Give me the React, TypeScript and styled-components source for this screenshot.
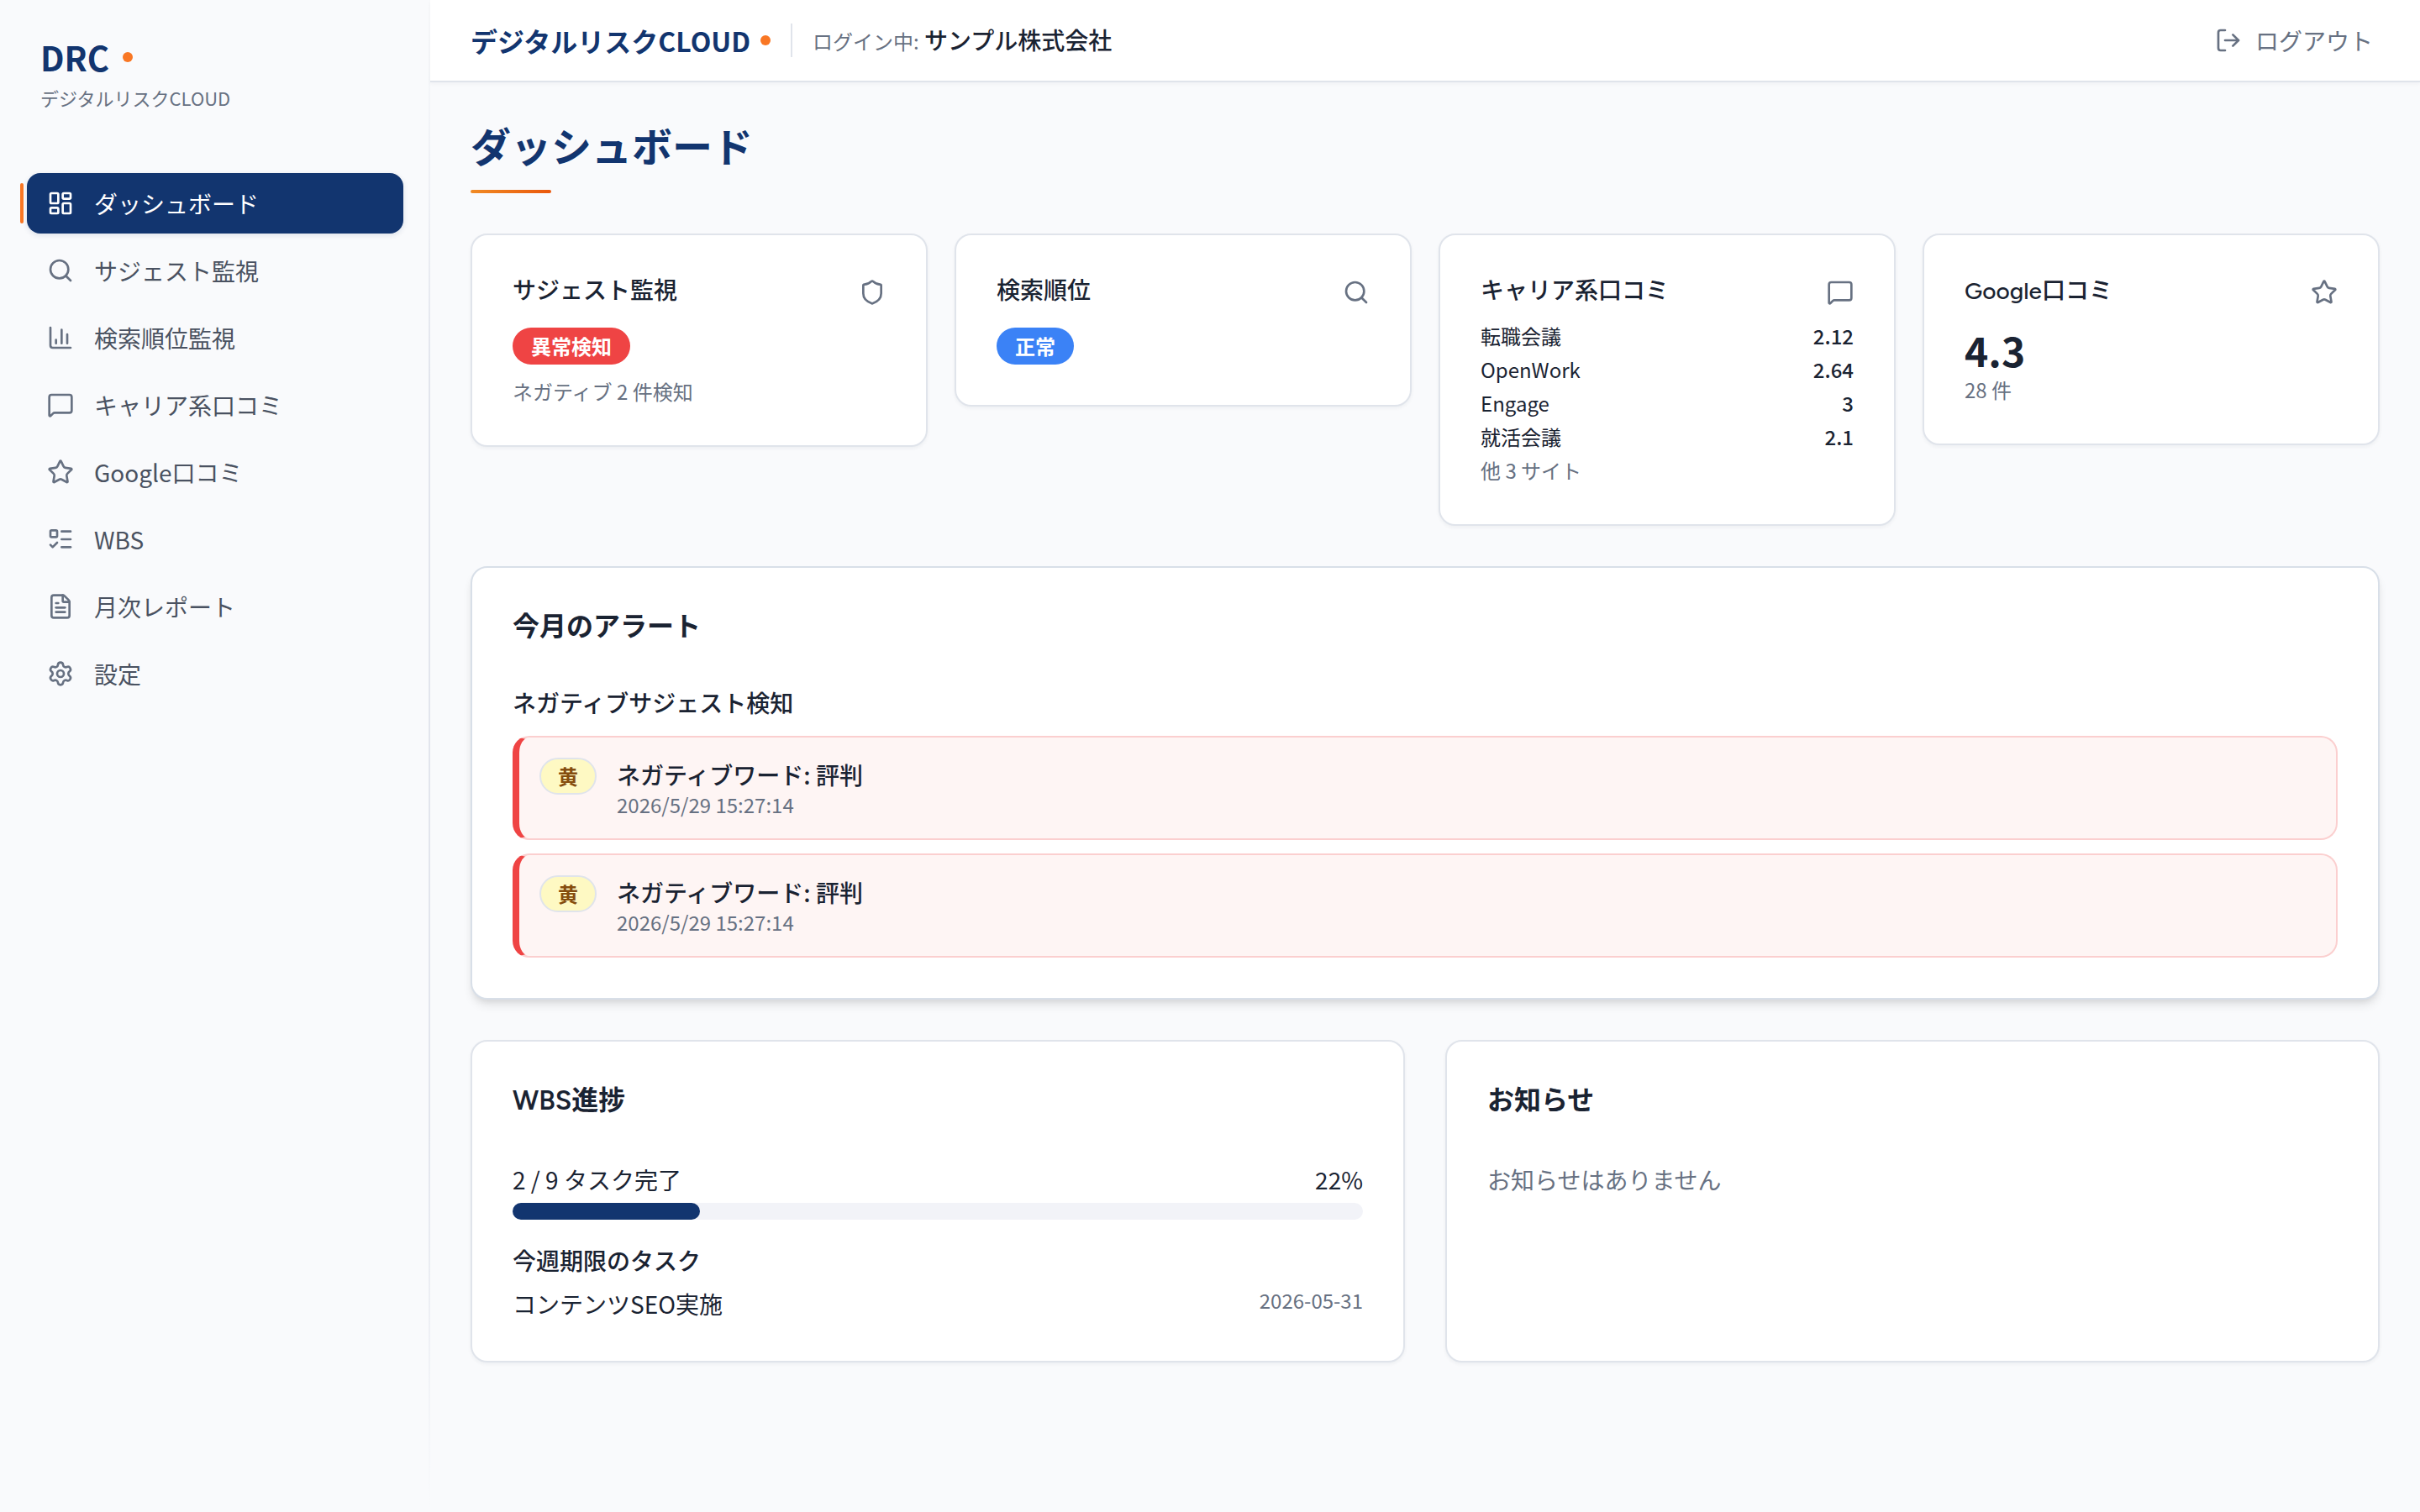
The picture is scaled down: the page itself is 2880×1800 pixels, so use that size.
import React from "react";
import styled, { createGlobalStyle, css } from "styled-components";
import {
  ChartColumn,
  FileText,
  LayoutDashboard,
  ListTodo,
  LogOut,
  MessageSquare,
  Search,
  Settings,
  Shield,
  Star,
  type LucideIcon,
} from "lucide-react";

const color = {
  navy: "#12356f",
  orange: "#f97724",
  ink: "#1a2332",
  body: "#4a5261",
  muted: "#677182",
  line: "#e0e4eb",
  lineStrong: "#d8dfe8",
  page: "#f9fafc",
  track: "#f2f3f8",
  red: "#ef4444",
  blue: "#3b82f6",
};

const GlobalStyle = createGlobalStyle`
  *, *::before, *::after { box-sizing: border-box; }
  body {
    margin: 0;
    background: ${color.page};
    color: ${color.ink};
    font-family: "Noto Sans CJK JP", sans-serif;
    font-size: 28px;
    line-height: 40px;
  }
  h1, h2, h3, p, ul, dl, dd { margin: 0; padding: 0; }
  ul { list-style: none; }
`;

const Shell = styled.div`
  display: flex;
  min-height: 100vh;
`;

const Sidebar = styled.aside`
  flex: 0 0 512px;
  display: flex;
  flex-direction: column;
  gap: 70px;
  padding: 40px 30px 40px 32px;
  border-right: 2px solid;
  border-image: linear-gradient(${color.page}, #e2e5ed 25%, #e2e5ed 75%, ${color.page}) 1;
`;

const Brand = styled.div`
  padding: 0 16px;
`;

const BrandName = styled.div`
  display: flex;
  align-items: center;
  gap: 16px;
  color: ${color.navy};
  font-size: 40px;
  line-height: 56px;
  font-weight: 700;
`;

const Dot = styled.span`
  width: 12px;
  height: 12px;
  border-radius: 50%;
  background: ${color.orange};
`;

const BrandSub = styled.p`
  color: ${color.muted};
  font-size: 22px;
  line-height: 40px;
`;

const NavList = styled.ul`
  display: flex;
  flex-direction: column;
  gap: 8px;
`;

const NavLink = styled.a<{ $active?: boolean }>`
  position: relative;
  display: flex;
  align-items: center;
  gap: 24px;
  height: 72px;
  padding: 0 24px;
  border-radius: 16px;
  color: ${color.body};
  text-decoration: none;

  svg { color: ${color.muted}; }

  ${(p) =>
    p.$active &&
    css`
      background: ${color.navy};
      color: #fff;
      box-shadow: 0 2px 6px rgba(18, 53, 111, 0.12);

      svg { color: #fff; }

      &::before {
        content: "";
        position: absolute;
        left: -8px;
        top: 12px;
        bottom: 12px;
        width: 4px;
        border-radius: 2px;
        background: ${color.orange};
      }
    `}
`;

const Main = styled.div`
  flex: 1;
  min-width: 0;
`;

const Header = styled.header`
  display: flex;
  align-items: center;
  justify-content: space-between;
  height: 98px;
  padding: 0 56px 0 48px;
  background: #fff;
  border-bottom: 2px solid ${color.line};
  box-shadow: 0 2px 4px rgba(18, 35, 60, 0.04);
`;

const HeaderLeft = styled.div`
  display: flex;
  align-items: center;
  gap: 24px;
`;

const Product = styled.div`
  display: flex;
  align-items: center;
  gap: 12px;
  color: ${color.navy};
  font-size: 32px;
  font-weight: 700;
`;

const Divider = styled.span`
  width: 2px;
  height: 40px;
  background: ${color.line};
`;

const Account = styled.p`
  color: ${color.muted};
  font-size: 28px;

  span {
    font-size: 24px;
  }

  strong {
    color: ${color.ink};
    font-weight: 500;
  }
`;

const LogoutButton = styled.button`
  display: flex;
  align-items: center;
  gap: 16px;
  padding: 0;
  border: 0;
  background: none;
  color: ${color.muted};
  font: inherit;
  cursor: pointer;
`;

const Content = styled.main`
  display: flex;
  flex-direction: column;
  gap: 48px;
  padding: 48px;
`;

const PageTitle = styled.h1`
  color: ${color.navy};
  font-size: 48px;
  line-height: 52px;
  font-weight: 700;

  &::after {
    content: "";
    display: block;
    width: 96px;
    height: 4px;
    margin-top: 28px;
    border-radius: 2px;
    background: linear-gradient(90deg, #f08a24, #ea580c);
  }
`;

const StatGrid = styled.section`
  display: grid;
  grid-template-columns: repeat(4, 1fr);
  align-items: start;
  gap: 32px;
`;

const PanelGrid = styled.section`
  display: grid;
  grid-template-columns: repeat(2, 1fr);
  gap: 48px;
`;

const Card = styled.section<{ $raised?: boolean }>`
  padding: 48px;
  border: 2px solid ${(p) => (p.$raised ? color.lineStrong : color.line)};
  border-radius: 20px;
  background: #fff;
  box-shadow: ${(p) =>
    p.$raised
      ? "0 8px 12px -2px rgba(0, 0, 0, 0.1), 0 4px 8px -4px rgba(0, 0, 0, 0.1)"
      : "0 2px 4px rgba(18, 35, 60, 0.05)"};
`;

const StatHead = styled.div`
  display: flex;
  align-items: flex-end;
  justify-content: space-between;
  margin-bottom: 20px;
  color: ${color.muted};
`;

const StatTitle = styled.h2`
  color: ${color.ink};
  font-family: Figtree, "Noto Sans CJK JP", sans-serif;
  font-size: 28px;
  line-height: 36px;
  font-weight: 500;
`;

const Pill = styled.span<{ $tone: "danger" | "info" | "warn" }>`
  display: inline-flex;
  align-items: center;
  height: 44px;
  padding: 0 20px;
  border: 2px solid transparent;
  border-radius: 22px;
  color: #fff;
  background: ${(p) => (p.$tone === "danger" ? color.red : color.blue)} border-box;
  font-size: 24px;
  font-weight: 700;

  ${(p) =>
    p.$tone === "warn" &&
    css`
      border-color: ${color.line};
      background: #fef9c3;
      color: #854d0e;
    `}
`;

const Small = styled.p`
  color: ${color.muted};
  font-size: 24px;
  line-height: 32px;
`;

const StatusBlock = styled.div`
  display: flex;
  flex-direction: column;
  align-items: flex-start;
  gap: 16px;
  padding-top: 6px;
`;

const Score = styled.p`
  font-size: 48px;
  line-height: 64px;
  font-weight: 700;
`;

const SiteList = styled.dl`
  display: flex;
  flex-direction: column;
  gap: 8px;
  margin-bottom: 8px;
`;

const SiteRow = styled.div`
  display: flex;
  justify-content: space-between;
  font-size: 24px;
  line-height: 32px;

  dd { font-weight: 500; }
`;

const PanelTitle = styled.h2`
  margin-bottom: 52px;
  font-family: Figtree, "Noto Sans CJK JP", sans-serif;
  font-size: 32px;
  line-height: 44px;
  font-weight: 600;
`;

const SubTitle = styled.h3`
  font-size: 28px;
  line-height: 32px;
  font-weight: 500;
`;

const AlertList = styled.ul`
  display: flex;
  flex-direction: column;
  gap: 16px;
  margin-top: 24px;
`;

const Alert = styled.li`
  display: flex;
  align-items: flex-start;
  gap: 24px;
  padding: 24px;
  border: 2px solid #fbcfcf;
  border-left: 8px solid ${color.red};
  border-radius: 20px;
  background: #fef5f4;
`;

const AlertText = styled.p`
  font-weight: 500;
`;

const Row = styled.div`
  display: flex;
  justify-content: space-between;
`;

const TaskRow = styled(Row)`
  margin-top: 16px;
`;

const Track = styled.div`
  height: 20px;
  margin: 8px 0 32px;
  border-radius: 10px;
  background: ${color.track};
`;

const Fill = styled.div`
  height: 100%;
  border-radius: 10px;
  background: ${color.navy};
`;

const Empty = styled.p`
  color: ${color.muted};
`;

const navItems: { icon: LucideIcon; label: string }[] = [
  { icon: LayoutDashboard, label: "ダッシュボード" },
  { icon: Search, label: "サジェスト監視" },
  { icon: ChartColumn, label: "検索順位監視" },
  { icon: MessageSquare, label: "キャリア系口コミ" },
  { icon: Star, label: "Google口コミ" },
  { icon: ListTodo, label: "WBS" },
  { icon: FileText, label: "月次レポート" },
  { icon: Settings, label: "設定" },
];

const sites = [
  { name: "転職会議", score: "2.12" },
  { name: "OpenWork", score: "2.64" },
  { name: "Engage", score: "3" },
  { name: "就活会議", score: "2.1" },
];

const alerts = [
  { level: "黄", text: "ネガティブワード: 評判", time: "2026/5/29 15:27:14" },
  { level: "黄", text: "ネガティブワード: 評判", time: "2026/5/29 15:27:14" },
];

function StatCard(props: { title: string; icon: LucideIcon; children: React.ReactNode }) {
  const Icon = props.icon;
  return (
    <Card>
      <StatHead>
        <StatTitle>{props.title}</StatTitle>
        <Icon size={32} />
      </StatHead>
      {props.children}
    </Card>
  );
}

export default function App() {
  const done = 2;
  const total = 9;
  const percent = Math.round((done / total) * 100);

  return (
    <>
      <GlobalStyle />
      <Shell>
        <Sidebar>
          <Brand>
            <BrandName>
              DRC
              <Dot />
            </BrandName>
            <BrandSub>デジタルリスクCLOUD</BrandSub>
          </Brand>
          <nav>
            <NavList>
              {navItems.map(({ icon: Icon, label }, i) => (
                <li key={label}>
                  <NavLink href="#" $active={i === 0}>
                    <Icon size={32} />
                    {label}
                  </NavLink>
                </li>
              ))}
            </NavList>
          </nav>
        </Sidebar>
        <Main>
          <Header>
            <HeaderLeft>
              <Product>
                デジタルリスクCLOUD
                <Dot />
              </Product>
              <Divider />
              <Account>
                <span>ログイン中:</span> <strong>サンプル株式会社</strong>
              </Account>
            </HeaderLeft>
            <LogoutButton type="button">
              <LogOut size={32} />
              ログアウト
            </LogoutButton>
          </Header>
          <Content>
            <PageTitle>ダッシュボード</PageTitle>
            <StatGrid>
              <StatCard title="サジェスト監視" icon={Shield}>
                <StatusBlock>
                  <Pill $tone="danger">異常検知</Pill>
                  <Small>ネガティブ 2 件検知</Small>
                </StatusBlock>
              </StatCard>
              <StatCard title="検索順位" icon={Search}>
                <StatusBlock>
                  <Pill $tone="info">正常</Pill>
                </StatusBlock>
              </StatCard>
              <StatCard title="キャリア系口コミ" icon={MessageSquare}>
                <SiteList>
                  {sites.map((s) => (
                    <SiteRow key={s.name}>
                      <dt>{s.name}</dt>
                      <dd>{s.score}</dd>
                    </SiteRow>
                  ))}
                </SiteList>
                <Small>他 3 サイト</Small>
              </StatCard>
              <StatCard title="Google口コミ" icon={Star}>
                <Score>4.3</Score>
                <Small>28 件</Small>
              </StatCard>
            </StatGrid>
            <Card $raised>
              <PanelTitle>今月のアラート</PanelTitle>
              <SubTitle>ネガティブサジェスト検知</SubTitle>
              <AlertList>
                {alerts.map((a, i) => (
                  <Alert key={i}>
                    <Pill $tone="warn">{a.level}</Pill>
                    <div>
                      <AlertText>{a.text}</AlertText>
                      <Small>{a.time}</Small>
                    </div>
                  </Alert>
                ))}
              </AlertList>
            </Card>
            <PanelGrid>
              <Card>
                <PanelTitle>WBS進捗</PanelTitle>
                <Row>
                  <span>
                    {done} / {total} タスク完了
                  </span>
                  <span>{percent}%</span>
                </Row>
                <Track>
                  <Fill style={{ width: `${percent}%` }} />
                </Track>
                <SubTitle>今週期限のタスク</SubTitle>
                <TaskRow>
                  <span>コンテンツSEO実施</span>
                  <Small>2026-05-31</Small>
                </TaskRow>
              </Card>
              <Card>
                <PanelTitle>お知らせ</PanelTitle>
                <Empty>お知らせはありません</Empty>
              </Card>
            </PanelGrid>
          </Content>
        </Main>
      </Shell>
    </>
  );
}
